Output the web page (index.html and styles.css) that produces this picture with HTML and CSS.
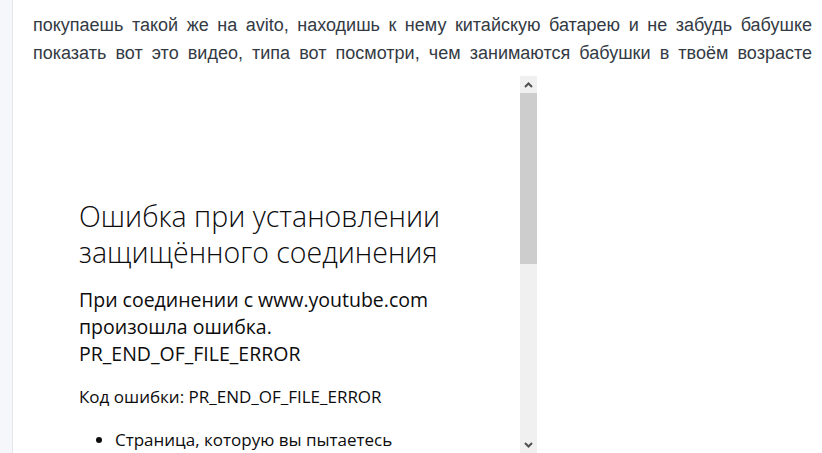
FILE: index.html
```html
<!DOCTYPE html>
<html lang="ru">
<head>
<meta charset="utf-8">
<title>Comment</title>
<link rel="stylesheet" href="styles.css">
</head>
<body>
<div class="page">
  <aside class="rail"></aside>
  <main class="main">
    <p class="comment">покупаешь такой же на avito, находишь к нему китайскую батарею и не забудь бабушке показать вот это видео, типа вот посмотри, чем занимаются бабушки в твоём возрасте</p>
    <div class="frame">
      <div class="frame-content">
        <h1 class="err-title">Ошибка при установлении защищённого соединения</h1>
        <p class="err-desc">При соединении с www.youtube.com произошла ошибка. PR_END_OF_FILE_ERROR</p>
        <p class="err-code">Код ошибки: PR_END_OF_FILE_ERROR</p>
        <ul class="err-list">
          <li>Страница, которую вы пытаетесь просмотреть, не может быть показана, так как достоверность полученных данных не может быть проверена.</li>
        </ul>
      </div>
      <div class="scrollbar">
        <div class="sb-btn">
          <svg width="9" height="6" viewBox="0 0 9 6"><path d="M1 5 L4.5 1.5 L8 5" fill="none" stroke="#505050" stroke-width="2"/></svg>
        </div>
        <div class="sb-thumb"></div>
        <div class="sb-track"></div>
        <div class="sb-btn">
          <svg width="9" height="6" viewBox="0 0 9 6"><path d="M1 1 L4.5 4.5 L8 1" fill="none" stroke="#505050" stroke-width="2"/></svg>
        </div>
      </div>
    </div>
  </main>
</div>
</body>
</html>
```

FILE: styles.css
```css
html, body {
  margin: 0;
  padding: 0;
  background: #ffffff;
  height: 100%;
  overflow: hidden;
}
.page {
  display: flex;
  height: 453px;
}
.rail {
  width: 12px;
  flex: none;
  background: #f6f7fb;
  border-right: 1px solid #e6e7ec;
}
.main {
  flex: 1;
  padding-left: 20px;
  display: flex;
  flex-direction: column;
}
.comment {
  margin: 11px 0 0 0;
  font-family: "Liberation Sans", Arial, sans-serif;
  font-size: 18px;
  line-height: 28px;
  color: #333a44;
  width: 779px;
  text-align: justify;
  text-align-last: justify;
}
.frame {
  margin-top: 9px;
  width: 504px;
  height: 377px;
  display: flex;
  overflow: hidden;
}
.frame-content {
  flex: 1;
  padding: 122px 50px 0 46px;
  font-family: "Open Sans", "Noto Sans", sans-serif;
  color: #0c0c0d;
  overflow: hidden;
}
.err-title {
  margin: 0;
  font-size: 28.5px;
  font-weight: 300;
  line-height: 36px;
}
.err-desc {
  margin: 16px 0 0 0;
  font-size: 19.5px;
  line-height: 27px;
}
.err-code {
  margin: 18px 0 0 0;
  font-size: 17px;
  line-height: 24px;
}
.err-list {
  margin: 19px 0 0 0;
  padding-left: 36px;
  font-size: 17px;
  line-height: 24px;
}
.scrollbar {
  width: 17px;
  flex: none;
  display: flex;
  flex-direction: column;
  background: #f0f0f0;
}
.sb-btn {
  height: 17px;
  display: flex;
  align-items: center;
  justify-content: center;
  flex: none;
}
.sb-thumb {
  height: 171px;
  background: #cdcdcd;
  flex: none;
}
.sb-track {
  flex: 1;
}
```
